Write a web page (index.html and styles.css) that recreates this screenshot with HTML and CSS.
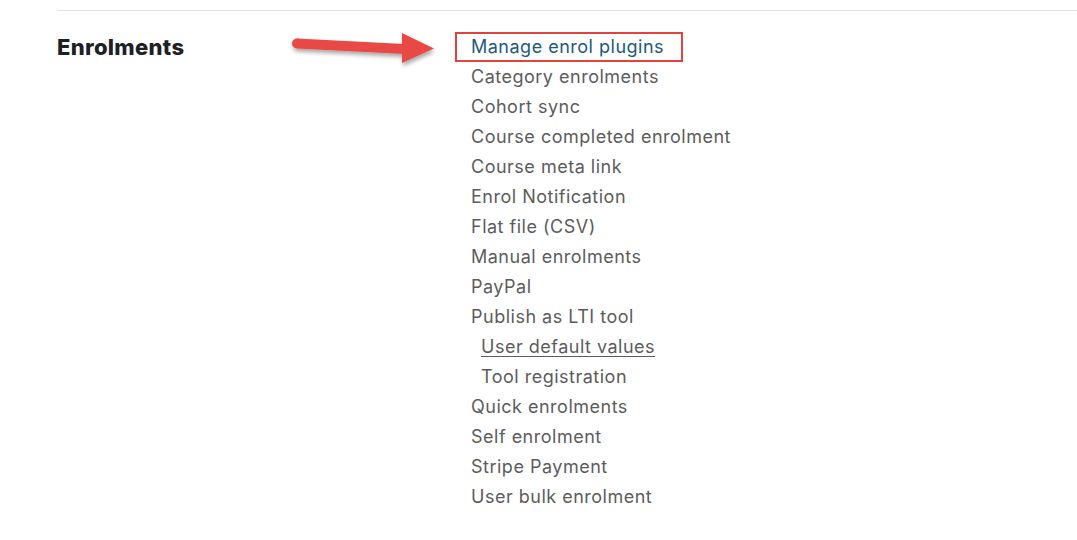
FILE: index.html
```html
<!DOCTYPE html>
<html>
<head>
<meta charset="utf-8">
<link rel="stylesheet" href="styles.css">
</head>
<body>
<div class="page">
  <div class="section">
    <h3 class="section-title">Enrolments</h3>
    <ul class="links">
      <li class="hl"><a class="link-box" href="#">Manage enrol plugins</a>
        <svg class="arrow" width="160" height="50" viewBox="0 0 160 50">
          <defs>
            <filter id="sh" x="-10%" y="-30%" width="130%" height="180%">
              <feDropShadow dx="1" dy="3" stdDeviation="2" flood-color="#000" flood-opacity="0.35"/>
            </filter>
          </defs>
          <g filter="url(#sh)" fill="#e84a45">
            <path d="M11 9.5 L118 15 L118 25 L11 19.5 Z"/>
            <circle cx="11" cy="14.5" r="5"/>
            <path d="M116 4 L148 19.5 L116 34 Z"/>
          </g>
        </svg>
      </li>
      <li>Category enrolments</li>
      <li>Cohort sync</li>
      <li>Course completed enrolment</li>
      <li>Course meta link</li>
      <li>Enrol Notification</li>
      <li>Flat file (CSV)</li>
      <li>Manual enrolments</li>
      <li>PayPal</li>
      <li>Publish as LTI tool</li>
      <li class="sub"><span class="under">User default values</span></li>
      <li class="sub">Tool registration</li>
      <li>Quick enrolments</li>
      <li>Self enrolment</li>
      <li>Stripe Payment</li>
      <li>User bulk enrolment</li>
    </ul>
  </div>
</div>
</body>
</html>
```
FILE: styles.css
```css
html, body {
  margin: 0;
  padding: 0;
  background: #fff;
}
body {
  font-family: Inter, "Open Sans", "Liberation Sans", sans-serif;
}
.page {
  padding: 10px 0 0 57px;
}
.section {
  border-top: 1px solid #e3e3e3;
  display: flex;
  padding-top: 21px;
}
.section-title {
  margin: 0;
  width: 414px;
  flex: none;
  font-size: 22px;
  font-weight: 800;
  letter-spacing: 0.3px;
  line-height: 30px;
  color: #1d2125;
}
.links {
  list-style: none;
  margin: 0;
  padding: 0;
}
.links li {
  font-size: 18px;
  letter-spacing: 0.5px;
  line-height: 30px;
  color: #5c5c5c;
  white-space: nowrap;
}
.links li.sub {
  padding-left: 10px;
}
.under {
  text-decoration: underline;
  text-underline-offset: 3px;
}
.hl {
  position: relative;
}
.link-box {
  display: inline-block;
  box-sizing: border-box;
  height: 30px;
  margin-left: -16px;
  padding: 0 17px 0 14px;
  border: 2px solid #e5423d;
  color: #1b5b80;
  text-decoration: none;
  line-height: 26px;
}
.arrow {
  position: absolute;
  left: -185px;
  top: -3px;
}
```
